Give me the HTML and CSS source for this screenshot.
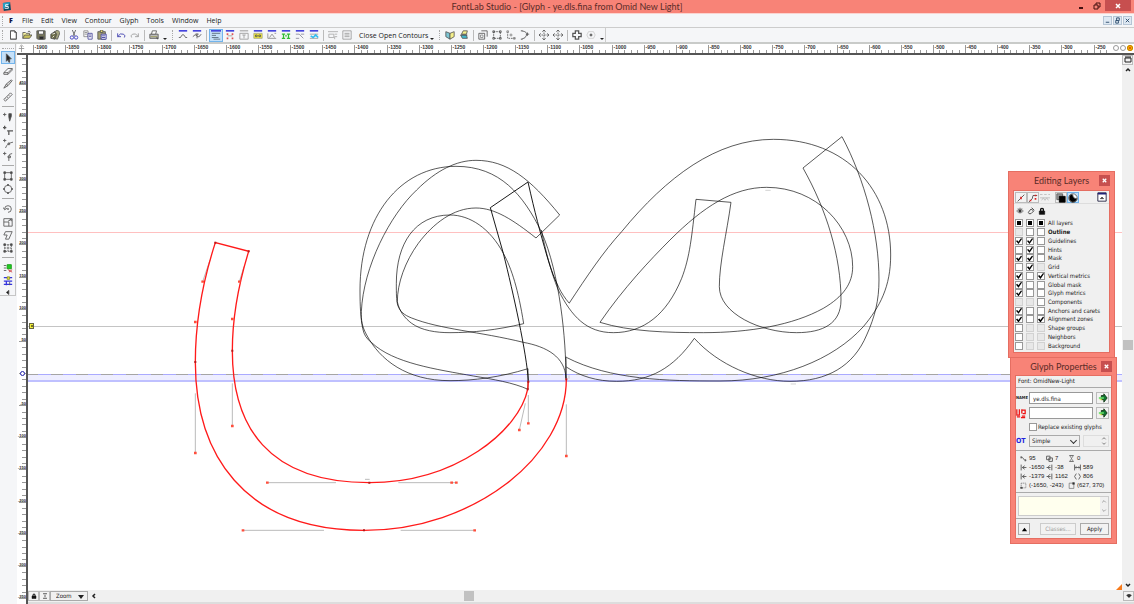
FILE: index.html
```html
<!DOCTYPE html>
<html lang="en">
<head>
<meta charset="utf-8">
<title>FontLab Studio - [Glyph - ye.dls.fina from Omid New Light]</title>
<link rel="stylesheet" href="styles.css">
</head>
<body>
<svg class="defs" aria-hidden="true">
  <symbol id="new" viewBox="0 0 12 12"><path d="M3 1h5l2 2v8H3z" fill="#fff"/><path d="M8 1v2h2M3 1h5l2 2v8H3z"/></symbol>
  <symbol id="open" viewBox="0 0 12 12"><path d="M1 10V3h3l1 1h4v2" fill="#fbf7a0"/><path d="M1 10l2-4h9l-3 4z" fill="#c9c25a"/><path d="M7 2q2-2 3 1"/></symbol>
  <symbol id="save" viewBox="0 0 12 12"><path d="M1 1h10v10H2l-1-1z" fill="#77775a"/><path d="M3 1h6v4H3z" fill="#fff"/><path d="M4 8h5v3H4z" fill="#222"/></symbol>
  <symbol id="saveall" viewBox="0 0 12 12"><path d="M4 3l5-3 3 3-3 8-5-1z" fill="#a5a580"/><path d="M1 5l5-3 2 3-2 6-5-1z" fill="#6b6b48"/><path d="M3 5l3-1M3 9l2-2" stroke="#fff"/></symbol>
  <symbol id="cut" viewBox="0 0 12 12"><path d="M4 0l3 7M8 0L5 7"/><circle cx="3.500" cy="9" r="2" stroke="#33b"/><circle cx="8.500" cy="9" r="2" stroke="#33b"/></symbol>
  <symbol id="copy" viewBox="0 0 12 12"><path d="M1 1h5v7H1zM2 3h3M2 5h3" stroke="#888"/><path d="M6 4h5v7H6z" fill="#fff" stroke="#449"/><path d="M7 6h3M7 8h3" stroke="#449"/></symbol>
  <symbol id="paste" viewBox="0 0 12 12"><path d="M1 2h9v9H1z" fill="#a39f70"/><path d="M4 0h3v3H4z" fill="#eee070"/><path d="M5 5h6v6H5z" fill="#fff" stroke="#339"/><path d="M6 7h4M6 9h4" stroke="#339"/></symbol>
  <symbol id="undo" viewBox="0 0 12 12"><path d="M2 4v4h4M2 8q3-5 7-3q3 2 1 4" stroke="#33a"/></symbol>
  <symbol id="redo" viewBox="0 0 12 12"><path d="M10 4v4H6M10 8Q7 3 3 5q-3 2-1 4" stroke="#999"/></symbol>
  <symbol id="print" viewBox="0 0 12 12"><path d="M1 5h10v5H1z" fill="#bbb"/><path d="M4 1h5l-1 4H3z" fill="#fff"/><path d="M2 8h8" stroke="#995"/><path d="M9 9l2 2" stroke-width="1.500"/></symbol>
  <symbol id="p1" viewBox="0 0 12 12"><path d="M1 1h10" class="blue"/><path d="M3 9q3-7 6 0M1 9h2M9 9h2"/></symbol>
  <symbol id="p2" viewBox="0 0 12 12"><path d="M1 1h10" class="blue"/><path d="M1 8q3-4 5-1t5-2M6 4v6M4 5h4"/></symbol>
  <symbol id="p3" viewBox="0 0 12 12"><path d="M0 1h12" class="blue"/><path d="M1 4h10M1 6.500h5M1 9h8M3 11h8" stroke="#567"/></symbol>
  <symbol id="p4" viewBox="0 0 12 12"><path d="M1 1h10" class="blue"/><path d="M2 5h2M8 5h2M2 10h2M8 10h2" stroke="#d55" stroke-width="2"/><path d="M3 7h6" stroke="#999"/></symbol>
  <symbol id="p5" viewBox="0 0 12 12"><path d="M1 1h10" stroke="#888"/><path d="M1 4h10v7H1zM4 6h4M6 6v4" stroke="#999"/></symbol>
  <symbol id="p6" viewBox="0 0 12 12"><path d="M1 1h10" class="blue"/><path d="M1 4h10v6H1z" fill="#f2e83a" stroke="#aa8"/><path d="M3 6h2v2H3zM7 6h2v2H7z"/></symbol>
  <symbol id="p7" viewBox="0 0 12 12"><path d="M1 1h10" class="blue"/><path d="M1 4v6h10M3 9l3-4 3 4M9 4h2" stroke="#888"/></symbol>
  <symbol id="p8" viewBox="0 0 12 12"><path d="M1 1h10" class="blue"/><path d="M1 5h4M1 10h4M7 5h4M7 10h4M3 5v5M9 5v5M5 7h2" stroke="#3b3" stroke-width="1.500"/></symbol>
  <symbol id="p9" viewBox="0 0 12 12"><path d="M1 1h10" class="blue"/><path d="M1 5h4l5 5M7 5h4M1 10h4" stroke="#889"/></symbol>
  <symbol id="p10" viewBox="0 0 12 12"><path d="M1 1h10" class="blue"/><path d="M1 5h10M1 10h10" stroke="#999"/><path d="M2 7l3 2 3-3 3 3" stroke="#3be" stroke-width="2"/></symbol>
  <symbol id="q1" viewBox="0 0 12 12"><path d="M0 2h12M1 5h6v4H1zM8 5h3M8 8h3M8 8v3" stroke="#aaa"/></symbol>
  <symbol id="q2" viewBox="0 0 12 12"><path d="M1 1h10v10H1zM3 4h6M3 6h6M3 8h6" stroke="#999"/></symbol>
  <symbol id="r1" viewBox="0 0 12 12"><path d="M1 2l5 2v7L1 8z" fill="#7cc6d4"/><path d="M11 2L6 4v7l5-3z" fill="#f5f08a"/></symbol>
  <symbol id="r2" viewBox="0 0 12 12"><path d="M3 5l2-4h5L9 5z" fill="#f5f08a"/><path d="M2 6h7l1 4H4z" fill="#41b7cc"/><path d="M2 6h8"/></symbol>
  <symbol id="s1" viewBox="0 0 12 12"><path d="M1 4h7v7H1zM4 1h7v7" /><path d="M3 6h3v3H3z" stroke="#888"/></symbol>
  <symbol id="s2" viewBox="0 0 12 12"><path d="M2 2h8v8H2z" stroke-dasharray="2 1"/><path d="M1 1h2v2H1zM9 1h2v2H9zM1 9h2v2H1zM9 9h2v2H9z"/></symbol>
  <symbol id="s3" viewBox="0 0 12 12"><path d="M2 2v8h9" stroke-dasharray="2 1"/><path d="M1 1h2v2H1zM5 5h2v2H5zM9 9h2v2H9z" stroke="#888"/></symbol>
  <symbol id="s4" viewBox="0 0 12 12"><path d="M2 1q7 1 6 5T2 11"/><path d="M1 1h2M7 5h4M9 3v4M1 11h2" /></symbol>
  <symbol id="t1" viewBox="0 0 12 12"><path d="M6 0v12M0 6h12" stroke-dasharray="2 1"/><path d="M4 2l2-2 2 2M4 10l2 2 2-2M2 4L0 6l2 2M10 4l2 2-2 2"/></symbol>
  <symbol id="u1" viewBox="0 0 12 12"><path d="M4 1h4v3h3v4H8v3H4V8H1V4h3z" stroke-width="1.500"/></symbol>
  <symbol id="u2" viewBox="0 0 12 12"><path d="M5 5h2v2H5z" fill="#777"/><path d="M3 2h6l2 4-2 4H3L1 6z" stroke="#ccc"/></symbol>

  <symbol id="arrow" viewBox="0 0 12 12"><path d="M4 1v9l2-2 1 3h1L8 7h2z" fill="#222"/></symbol>
  <symbol id="eraser" viewBox="0 0 12 12"><path d="M1 8l5-5h5v2L6 10H1zM1 8h5l5-5M6 8v2"/></symbol>
  <symbol id="knife" viewBox="0 0 12 12"><path d="M1 11l3-5 6-5 1 1-5 6zM4 6l2 2" fill="#ddd"/></symbol>
  <symbol id="measure" viewBox="0 0 12 12"><path d="M1 9l8-8 2 2-8 8zM3 8l1 1M5 6l1 1M7 4l1 1"/></symbol>
  <symbol id="pen" viewBox="0 0 12 12"><path d="M0 3h4M2 1v4M7 2h3v3L8 11 7 6z" fill="#444"/></symbol>
  <symbol id="corner" viewBox="0 0 12 12"><path d="M0 3h4M2 1v4M5 7h7M7 7v5" stroke-width="1.500"/></symbol>
  <symbol id="curve" viewBox="0 0 12 12"><path d="M0 3h4M2 1v4M3 12q2-6 9-7M6 6h2v2H6z"/></symbol>
  <symbol id="tangent" viewBox="0 0 12 12"><path d="M0 3h4M2 1v4M7 12V7q0-4 4-4M6 6h3v2H6z"/></symbol>
  <symbol id="rect" viewBox="0 0 12 12"><path d="M2 2h8v8H2z"/><path d="M1 1h2v2H1zM9 1h2v2H9zM1 9h2v2H1zM9 9h2v2H9z" fill="#444"/></symbol>
  <symbol id="oval" viewBox="0 0 12 12"><circle cx="6" cy="6" r="4.500"/><path d="M5 1h2M5 11h2M1 5v2M11 5v2" stroke-width="2"/></symbol>
  <symbol id="rotate" viewBox="0 0 12 12"><path d="M2 6a4 4 0 1 1 4 4M0 4l2 3 3-2M6 5v2M5 6h2"/></symbol>
  <symbol id="scale" viewBox="0 0 12 12"><path d="M1 2h10v9H1zM1 6h6v5M6 5l4-2M8 3h2v2"/></symbol>
  <symbol id="slant" viewBox="0 0 12 12"><path d="M3 2h8L7 11H3L5 6H1z"/></symbol>
  <symbol id="free" viewBox="0 0 12 12"><path d="M2 2h8v8H2zM6 2v8M2 6h8" stroke-dasharray="2 1"/><path d="M1 1h2v2H1zM9 1h2v2H9zM1 9h2v2H1zM9 9h2v2H9z" fill="#444"/></symbol>
  <symbol id="vg1" viewBox="0 0 12 12"><path d="M1 3h3M1 6h3M1 9h3"/><path d="M5 2h5v5H5z" fill="#2c2" stroke="#191"/><path d="M6 8l5 3M11 8l-4 3" stroke="#c33"/></symbol>
  <symbol id="vg2" viewBox="0 0 12 12"><path d="M1 2h10M1 6h10M1 10h10M4 6v5" stroke="#33d" stroke-width="1.500"/><path d="M5 1h3v3H5z" fill="#ee2" stroke="#883"/><path d="M8 7v4"/></symbol>
  <symbol id="left" viewBox="0 0 12 12"><path d="M7 4v5L4 6.500z" fill="#111"/></symbol>

  <symbol id="go" viewBox="0 0 12 12"><path d="M4 3h3V1l4 5-4 5V8H4z" fill="#173" stroke="#131"/><path d="M1 6h6" stroke="#6d6" stroke-width="2"/><path d="M2 8h3" stroke="#de3"/></symbol>
  <symbol id="node1" viewBox="0 0 12 12"><path d="M2 10l8-8" stroke="#444"/><path d="M5 6h2" stroke="#d22" stroke-width="3"/></symbol>
  <symbol id="node2" viewBox="0 0 12 12"><path d="M1 11l4-4 1-4h5" stroke="#444"/><path d="M2 9h2M8 3h2M8 7h2" stroke="#d22" stroke-width="2"/></symbol>
  <symbol id="node3" viewBox="0 0 12 12"><path d="M0 3h3M5 3h3M10 3h2M0 7h12M2 10l2-3 2 3 2-3 2 3" stroke="#bbb"/></symbol>
  <symbol id="stack" viewBox="0 0 12 12"><path d="M1 1h7v7H1z" fill="#999"/><path d="M4 4h7v7H4z" fill="#000" stroke="#000"/></symbol>
  <symbol id="yin" viewBox="0 0 12 12"><circle cx="6" cy="6" r="5" fill="#fff"/><path d="M2 3q4-3 4 1q1 3 5 3q-2 5-6 4Q0 9 2 3z" fill="#000"/></symbol>
  <symbol id="win" viewBox="0 0 12 12"><path d="M1 1h10v10H1z" fill="#fff" stroke="#113"/><path d="M1 2h10" stroke="#227" stroke-width="2"/><path d="M4 8l2-2 2 2z" fill="#111"/></symbol>
  <symbol id="eye" viewBox="0 0 12 12"><path d="M1 6q5-6 10 0q-5 6-10 0z"/><circle cx="6" cy="6" r="2" fill="#222"/><path d="M3 2l1 2M6 1v2M9 2L8 4"/></symbol>
  <symbol id="edit" viewBox="0 0 12 12"><path d="M2 8l4-5 4 3-4 4H3zM7 1l4 4" stroke-width="1.500"/></symbol>
  <symbol id="lock" viewBox="0 0 12 12"><path d="M2 6h8v5H2z" fill="#111" stroke="#111"/><path d="M4 6V3q2-2 4 0v3" stroke="#111" stroke-width="2"/></symbol>
  <symbol id="m1" viewBox="0 0 12 12"><path d="M1 4h3l4 5h3M2 2v4M9 7v4" stroke-width="1.500"/></symbol>
  <symbol id="m2" viewBox="0 0 12 12"><path d="M1 2h6v6H1zM5 5h6v6H5z" stroke-width="1.500"/></symbol>
  <symbol id="m3" viewBox="0 0 12 12"><path d="M3 1h6L6 6l3 5H3l3-5zM2 1h8M2 11h8"/></symbol>
  <symbol id="m4" viewBox="0 0 12 12"><path d="M2 1v10M11 6H4M8 3L4 6l4 3" stroke-width="1.500"/></symbol>
  <symbol id="m5" viewBox="0 0 12 12"><path d="M10 1v10M1 6h7M7 2L3 6l4 4" stroke-width="1.500"/></symbol>
  <symbol id="m6" viewBox="0 0 12 12"><path d="M1 1v10M11 1v10M2 6h8M4 4L2 6l2 2M8 4l2 2-2 2" stroke-width="1.500"/></symbol>
  <symbol id="m9" viewBox="0 0 12 12"><path d="M4 1L1 6l3 5M8 1l3 5-3 5" stroke-width="1.500"/></symbol>
  <symbol id="m7" viewBox="0 0 12 12"><path d="M2 2h8v8H2z" stroke-dasharray="2 1"/><path d="M1 9h3v2H1z" fill="#222"/></symbol>
  <symbol id="m8" viewBox="0 0 12 12"><path d="M2 2h8v9H2z"/><path d="M8 1h3v3H8z" fill="#222"/></symbol>
</svg>

<header class="titlebar">
  <svg class="logo" viewBox="0 0 10 10"><path d="M1 1l8-1 1 9-8 1z" fill="#0d4d66"/><path d="M1 1l8-1-1 3-7 5z" fill="#2b9dc0"/><path d="M7 3H4v2h3v2H3" fill="none" stroke="#fff"/></svg>
  <h1>FontLab Studio - [Glyph - ye.dls.fina from Omid New Light]</h1>
  <div class="winctl">
    <button aria-label="Minimize"><svg viewBox="0 0 8 8"><path d="M2 6h4" stroke="#411" stroke-width="2"/></svg></button>
    <button aria-label="Restore"><svg viewBox="0 0 8 8"><path d="M1 3h4v4H1zM3 3V1h4v4H5" fill="none" stroke="#411"/></svg></button>
    <button class="close" aria-label="Close"><svg viewBox="0 0 8 8"><path d="M2 2l4 4M6 2L2 6" stroke="#fff" stroke-width="1.500"/></svg></button>
  </div>
</header>

<nav class="menubar">
  <i class="grip"></i>
  <b class="f">F</b>
  <button>File</button><button>Edit</button><button>View</button><button>Contour</button><button>Glyph</button><button>Tools</button><button>Window</button><button>Help</button>
  <div class="mdi">
    <button aria-label="Minimize document"><svg viewBox="0 0 8 8"><path d="M2 6h4" stroke="#246"/></svg></button>
    <button aria-label="Restore document"><svg viewBox="0 0 8 8"><path d="M2 4h3v3H2zM3 4V1h3v3H5" fill="none" stroke="#246"/></svg></button>
    <button aria-label="Close document"><svg viewBox="0 0 8 8"><path d="M2 2l4 4M6 2L2 6" stroke="#246"/></svg></button>
  </div>
</nav>

<div class="toolbar" id="toolbar"></div>

<main class="work">
  <aside class="dock"><div class="tools" id="tools"></div></aside>
  <div class="hruler">
    <svg class="cross" viewBox="0 0 10 10"><path d="M5 2v7M2 5h6M3 3l2-2 2 2" fill="none" stroke="#999"/></svg>
    <svg class="scale" id="hscale"></svg>
    <div class="dots"><i></i><i></i><i class="hot"></i></div>
  </div>
  <svg class="vruler" id="vscale"></svg>
  <section class="canvas">
    <svg class="drawing">
      <rect class="zone" x="0" y="320" width="100%" height="5"/>
      <rect class="zoneline" x="0" y="325" width="100%" height="2"/>
      <path class="meanline" d="M0 177.500H4000"/>
      <path class="xline" d="M0 271.500H4000"/>
      <path class="baseline" d="M0 319.500H4000"/>
      <path class="basedash" d="M10 319.500H4000"/>
      <g transform="translate(-28 -55)">
        <rect x="29.500" y="323.500" width="4" height="5" fill="#f4f03c" stroke="#664"/><path d="M31 326h2" stroke="#000"/>
        <g class="ink" transform="translate(340 140) scale(.33333)">
          <path d="M678 715C678 600 660 400 604 275C550 165 480 79 348 79C180 79 60 230 60 450C60 500 62 535 68 565C72 585 80 597 95 608C160 670 290 688 400 708C460 718 520 728 564 748V686C480 712 400 722 330 722C200 722 120 660 80 585C66 560 63 540 64 515C70 380 150 225 230 150C290 90 350 61 408 61C500 61 570 115 659 225L588 294C520 240 465 204 408 204C340 204 280 250 235 310C195 365 172 430 172 485C178 515 195 535 215 550C245 572 290 578 330 578C400 578 470 570 551 551C535 450 515 385 490 340C450 265 390 225 330 225C225 225 169 310 169 430C169 460 169 480 173 495C180 515 192 525 215 534C300 568 420 575 550 607C620 620 675 650 678 715"/>
          <path d="M604 270C620 350 640 415 655 450"/>
          <path class="heavy" d="M565 722C560 640 520 460 490 340L451 203L564 126C585 220 600 275 620 345C635 395 645 420 655 440"/>
          <path d="M655 440C665 460 675 475 688 490M678 650V718"/>
        </g>
        <g class="ink" transform="translate(560 120) scale(.33333)">
          <path d="M28 549C80 470 130 395 185 335C320 170 470 58 640 58C860 58 992 210 992 405C992 500 960 560 910 620C820 720 660 783 480 783C320 783 150 780 19 712"/>
          <path d="M19 741C60 768 110 784 170 784C270 784 340 745 403 655C475 735 590 784 690 784C800 784 880 740 920 645C945 590 957 540 957 480C957 340 915 180 846 50L729 144C800 270 843 410 843 540C843 610 790 638 710 638C600 638 478 580 478 500C478 430 500 340 513 247L408 238C395 350 390 410 365 475C320 585 250 638 160 638C80 638 35 590 -5 510"/>
          <path d="M120 607C190 505 270 420 330 360C430 260 520 202 620 202C770 202 878 320 878 440C878 490 850 530 790 565C700 615 570 638 430 638C320 638 210 635 120 607"/>
          <path class="tick" d="M616 211h16M692 792h16M27 766v10"/>
        </g>
        <g transform="translate(180 230) scale(.33333)">
          <path class="lever" d="M46 490V669M157 460V588M262 758H468M655 758H829M189 901H432M662 901H884M1159 523V678M1045 495V580M1036 520L1018 600M68 155L90 90M178 155L192 110M555 748h14"/>
          <path class="red" d="M1045 455L1043 478C1018 600 829 758 568 758C262 758 157 588 157 362C157 267 178 155 206 64L106 38C68 155 46 276 46 396C46 669 189 901 552 901C884 901 1159 678 1159 448"/>
          <path class="pts" d="M42 669h8M153 588h8M258 758h8M811 758h8M825 758h8M185 901h8M880 901h8M1155 678h8M1041 580h8M1014 600h8M64 155h8M174 155h8M42 276h8M153 267h8"/>
          <path class="nodes" d="M103 38h6M203 64h6M43 396h6M154 362h6M565 758h6M549 901h6M1040 478h6M1042 455h6M1156 448h6"/>
        </g>
      </g>
    </svg>
    <i class="corner"></i>
  </section>
  <div class="vscroll">
    <button class="box" aria-label="Maximize view"><svg viewBox="0 0 8 8"><path d="M1 2h6v4H1zM1 1h6" fill="none" stroke="#222"/></svg></button>
    <button aria-label="Scroll up"><svg viewBox="0 0 8 8"><path d="M2 5l2-2 2 2" fill="none" stroke="#222" stroke-width="1.500"/></svg></button>
    <div class="track"><i class="thumb"></i></div>
    <button aria-label="Scroll down"><svg viewBox="0 0 8 8"><path d="M2 3l2 2 2-2" fill="none" stroke="#222" stroke-width="1.500"/></svg></button>
  </div>
  <footer class="hscroll">
    <button class="box" aria-label="Lock"><svg class="ic"><use href="#lock"/></svg></button>
    <button class="box" aria-label="Info"><svg class="ic"><use href="#m3"/></svg></button>
    <div class="pick zoom"><select aria-label="Zoom"><option>Zoom</option></select></div>
    <button aria-label="Scroll left"><svg viewBox="0 0 8 8"><path d="M5 2L3 4l2 2" fill="none" stroke="#222" stroke-width="1.500"/></svg></button>
    <div class="track"><i class="thumb"></i></div>
    <button class="box" aria-label="Options"><svg viewBox="0 0 8 8"><path d="M2 2h4M1 3h6L4 6z" fill="#222" stroke="#222"/></svg></button>
  </footer>
</main>

<section class="panel layers">
  <h2>Editing Layers</h2><button class="x" aria-label="Close layers"><svg viewBox="0 0 8 8"><path d="M2 2l4 4M6 2L2 6" stroke="#fff" stroke-width="1.500"/></svg></button>
  <div class="body">
    <div class="modes">
      <button class="box" aria-label="Nodes"><svg class="ic"><use href="#node1"/></svg></button>
      <button class="box" aria-label="Control vectors"><svg class="ic"><use href="#node2"/></svg></button>
      <button aria-label="Coordinates"><svg class="ic"><use href="#node3"/></svg></button>
      <button class="box push" aria-label="Fill outline"><svg class="ic"><use href="#stack"/></svg></button>
      <button class="box on" aria-label="Contrast"><svg class="ic"><use href="#yin"/></svg></button>
      <button class="box end" aria-label="Panel options"><svg class="ic"><use href="#win"/></svg></button>
    </div>
    <div class="heads"><svg class="ic"><use href="#eye"/></svg><svg class="ic"><use href="#edit"/></svg><svg class="ic"><use href="#lock"/></svg></div>
    <div class="rows" id="rows"></div>
  </div>
</section>

<section class="panel props">
  <h2>Glyph Properties</h2><button class="x" aria-label="Close properties"><svg viewBox="0 0 8 8"><path d="M2 2l4 4M6 2L2 6" stroke="#fff" stroke-width="1.500"/></svg></button>
  <div class="body">
    <div class="font">Font: OmidNew-Light</div>
    <div class="form">
      <label class="tag" for="gname">NAME</label><input class="field" id="gname" value="ye.dls.fina"><button class="box" aria-label="Apply name"><svg class="ic"><use href="#go"/></svg></button>
      <label class="tag uni" for="guni" title="Unicode"><svg viewBox="0 0 12 12"><path d="M1 1v7h3V1M7 1v5M7 2h4v4H8M1 10h4M7 9h4M6 11h5" fill="none" stroke="#e11" stroke-width="1.500"/></svg></label><input class="field" id="guni"><button class="box" aria-label="Apply code"><svg class="ic"><use href="#go"/></svg></button>
      <label class="replace"><input type="checkbox">Replace existing glyphs</label>
      <label class="tag ot" for="gtype">OT</label>
      <div class="typerow"><div class="pick chev"><select id="gtype"><option>Simple</option></select></div>
      <div class="spin"><svg viewBox="0 0 8 12"><path d="M2 4l2-2 2 2M2 8l2 2 2-2" fill="none" stroke="#666"/></svg></div></div>
    </div>
    <div class="stats">
      <div class="three"><svg class="ic"><use href="#m1"/></svg><span>95</span><svg class="ic"><use href="#m2"/></svg><span>7</span><svg class="ic"><use href="#m3"/></svg><span>0</span></div>
      <div><svg class="ic"><use href="#m4"/></svg><span>-1650</span><svg class="ic"><use href="#m5"/></svg><span>-38</span><svg class="ic"><use href="#m6"/></svg><span>589</span></div>
      <div><svg class="ic"><use href="#m4"/></svg><span>-1379</span><svg class="ic"><use href="#m5"/></svg><span>1162</span><svg class="ic"><use href="#m9"/></svg><span>806</span></div>
      <div class="wide"><svg class="ic"><use href="#m7"/></svg><span>(-1650, -243)</span><svg class="ic"><use href="#m8"/></svg><span>(627, 370)</span></div>
    </div>
    <div class="note"><textarea aria-label="Note"></textarea><svg viewBox="0 0 8 20"><path d="M2 6l2-2 2 2M2 14l2 2 2-2" fill="none" stroke="#999"/></svg></div>
    <div class="actions"><button class="box up" aria-label="Collapse"><svg viewBox="0 0 8 8"><path d="M1 6l3-4 3 4z" fill="#000"/></svg></button><button class="push classes" disabled>Classes...</button><button class="push">Apply</button></div>
  </div>
</section>
<script src="app.js"></script>
</body>
</html>
```

FILE: styles.css
```css
* { box-sizing: border-box; }
html, body { height: 100%; }
body {
  margin: 0; display: flex; flex-direction: column; overflow: hidden; position: relative;
  font: 7px/9px "Open Sans", "Noto Sans", sans-serif; color: #1a1a1a; background: #f5f6f8;
}
button, input, select, textarea { font: inherit; color: inherit; margin: 0; padding: 0; border: 0; background: none; border-radius: 0; }
h1, h2 { margin: 0; font-weight: 400; }
svg { display: block; }
.defs { position: absolute; width: 0; height: 0; }
symbol { fill: none; stroke: #555; }
symbol .blue { stroke: #44d; stroke-width: 2; }
.ic { width: 10px; height: 10px; fill: none; stroke: #555; }

.titlebar { flex: none; height: 14px; display: grid; grid-template-columns: 61px 1fr 61px; background: #f88377; border-bottom: 1px solid #fbd3cf; }
.logo { width: 9px; height: 9px; margin: 2px; }
.titlebar h1 { text-align: center; font: 9px/13px Lato, "Open Sans", sans-serif; color: #5a2b27; }
.winctl { display: flex; height: 11px; }
.winctl button { width: 16px; display: grid; place-items: center; }
.winctl svg { width: 8px; height: 8px; }
.winctl .close { width: 26px; background: #c74f4f; }

.menubar { flex: none; height: 14px; display: flex; align-items: center; border-bottom: 1px solid #ccc; }
.menubar > button { margin-right: 8px; }
.menubar .f { width: 15px; color: #114; font-size: 7px; font-weight: 800; padding-left: 3px; }
.menubar .f + button { margin-left: 1px; }
.grip { width: 2px; height: 10px; margin: 0 2px; border-left: 1px dotted #aaa; }
.mdi { margin-left: auto; display: flex; gap: 1px; padding-right: 2px; }
.mdi button { width: 9px; height: 9px; background: #dfe9f3; border: 1px solid #b5c5d5; }
.mdi svg { width: 7px; height: 7px; }

.toolbar { flex: none; height: 16px; display: flex; align-items: center; border-bottom: 2px solid #c9cbc9; }
.tb { width: 14px; height: 13px; display: grid; place-items: center; flex: none; }
.tb.on { background: #c5e0f8; border: 1px solid #72b4ec; }
.sep { width: 1px; height: 11px; margin: 0 2px; background: #bbb; }
.caret { width: 7px; height: 10px; display: grid; place-items: end center; }
.caret::after { content: ""; border: 2px solid transparent; border-top-color: #222; border-bottom: 0; }
.textbtn { padding: 0 0 0 5px; }
.toolbar .grip { margin: 0 2px 0 4px; }
.toolbar .grip:first-child { margin-left: 2px; }
.toolbar .end { width: 1px; height: 14px; background: #ccc; }

.work { flex: 1; min-height: 0; display: grid; grid-template: 11px 1fr 14px / 17px 11px 1fr 12px; background: #fff; }
.dock { grid-row: 1 / 4; background: #f5f6f8; }
.tools { width: 16px; padding: 7px 1px 0; display: flex; flex-direction: column; align-items: center; border: solid #c5c5c5; border-width: 0 1px 1px 0; }
.tools::before { content: ""; width: 12px; border-top: 1px dotted #aaa; margin: -3px 0 2px; }
.tools hr { width: 12px; height: 1px; margin: 3px 0; border: 0; background: #aaa; }
.tools .small { height: 8px; }
.hruler { grid-column: 2 / 5; display: flex; border-bottom: 2px solid #555; }
.cross { width: 9px; height: 9px; flex: none; }
.hruler .scale { flex: 1; min-width: 0; height: 9px; }
.dots { display: flex; gap: 1px; padding: 1px 1px 0 0; }
.dots i { width: 6px; height: 6px; border: 1px solid #999; border-radius: 50%; }
.dots .hot { background: #d40; border: 2px solid #fb0; outline: 1px solid #b70; outline-offset: -1px; }
.vruler { grid-row: 2 / 4; width: 11px; height: 100%; border-right: 2px solid #555; }
.scale text { font: bold 5px "Liberation Sans", sans-serif; fill: #333; }
.vruler text { font: bold 4px "Liberation Sans", sans-serif; fill: #222; }
.scale path, .vruler path { stroke: #999; }
.canvas { position: relative; overflow: hidden; }
.drawing { width: 100%; height: 100%; }
.zone { fill: #eeeeff; } .zoneline { fill: #bfc0ff; }
.meanline { stroke: #ffc0c0; } .xline { stroke: #c4c4c4; } .baseline { stroke: #a5a5a5; }
.basedash { stroke: #aaf; stroke-dasharray: 13 12; }
.ink path { fill: none; stroke: #000; stroke-opacity: .65; stroke-width: 3; }
.ink .heavy { stroke-width: 3; stroke-opacity: .9; }
.ink .tick { stroke: #bbb; }
.lever { fill: none; stroke: #bbb; stroke-width: 3; }
.red { fill: none; stroke: #ff1a1a; stroke-width: 4; }
.pts { stroke: #ff4e3c; stroke-width: 7; } .nodes { stroke: #b81818; stroke-width: 6; }
.corner { position: absolute; right: 0; bottom: 0; width: 6px; height: 6px; background: #f77b1c; clip-path: polygon(100% 0, 100% 100%, 0 100%); }
.vscroll { display: flex; flex-direction: column; background: #f0f0f0; }
.vscroll button, .hscroll > button { width: 11px; height: 10px; display: grid; place-items: center; flex: none; }
.vscroll svg, .hscroll svg { width: 8px; height: 8px; }
.box { background: #f2f2f2; border: 1px solid #bbb; display: grid; place-items: center; }
.track { flex: 1; display: flex; }
.thumb { background: #c1c1c1; width: 10px; height: 10px; }
.vscroll .track { flex-direction: column; padding-left: 1px; }
.vscroll .track::before { content: ""; flex: 53 0 0; }
.vscroll .track::after { content: ""; flex: 46 0 0; }
.hscroll { grid-column: 3 / 5; background: #f0f0f0; display: flex; align-items: center; border-bottom: 2px solid #ddd; }
.hscroll .box svg { width: 6px; height: 6px; }
.hscroll .track::before { content: ""; flex: 36 0 0; }
.hscroll .track::after { content: ""; flex: 64 0 0; }
.pick { position: relative; }
.pick select { appearance: none; width: 100%; height: 100%; padding-left: 2px; border: 1px solid #aaa; background: #f0f0f0; }
.pick::after { content: ""; position: absolute; right: 4px; top: 4px; border: 3px solid transparent; border-top: 4px solid #222; border-bottom: 0; }
.zoom { width: 38px; height: 10px; font: 6px/8px "DejaVu Sans Condensed", "DejaVu Sans", sans-serif; }
.zoom select { padding-left: 5px; }
.chev::after { border: solid #333; border-width: 0 1px 1px 0; width: 4px; height: 4px; transform: rotate(45deg); top: 3px; }

.panel { position: absolute; width: 107px; padding: 0 4px 4px; background: #f88377; border: 1px solid #e56e62; font: 6px/8px "DejaVu Sans Condensed", "DejaVu Sans", sans-serif; }
.panel h2 { font: 9px/18px Lato, "Open Sans", sans-serif; color: #5a2b27; text-align: center; }
.panel .x { position: absolute; right: 4px; top: 3px; width: 11px; height: 11px; background: #c74f4f; display: grid; place-items: center; }
.panel .x svg { width: 7px; height: 7px; }
.panel .body { background: #f0f0f0; border: 1px solid #e56e62; }
.layers { right: 19px; top: 171px; height: 187px; display: flex; flex-direction: column; }
.layers .body { flex: 1; display: flex; flex-direction: column; }
.modes { display: flex; align-items: center; padding: 1px; height: 13px; border-bottom: 1px solid #ddd; }
.modes button { width: 12px; height: 11px; display: grid; place-items: center; }
.modes .push { margin-left: 4px; }
.modes .on { background: #c5e0f8; border-color: #72b4ec; }
.modes .end { margin-left: auto; border: 0; }
.heads { display: flex; gap: 3px; padding: 3px 2px 2px; }
.heads svg { width: 8px; height: 8px; }
.rows { flex: 1; display: grid; grid-template-rows: 11px; grid-auto-rows: 1fr; padding: 0 1px 2px; }
.row { display: flex; align-items: center; gap: 3px; min-height: 0; }
.row.strong { font-weight: 700; }
input[type="checkbox"] { appearance: none; width: 8px; height: 8px; background: #fff; border: 1px solid #999; display: grid; place-items: center; flex: none; }
input[type="checkbox"]:checked::before { content: ""; width: 6px; height: 6px; background: #000; clip-path: polygon(0 50%, 20% 35%, 40% 60%, 85% 0, 100% 15%, 42% 100%); }
input[type="checkbox"].mixed::before { content: ""; width: 4px; height: 4px; background: #000; }
input[type="checkbox"]:disabled { background: #e8e8e8; border-color: #d2d2d2; }

.props { right: 17px; top: 357px; }
.props h2 { line-height: 17px; }
.props .font { height: 12px; padding: 1px 2px; border-bottom: 1px solid #aaa; }
.form { display: grid; grid-template-columns: 10px 1fr 13px; gap: 3px; padding: 4px 2px 3px 0; align-items: center; border-bottom: 1px solid #aaa; }
.form .field { width: 100%; height: 12px; padding: 0 3px; background: #fff; border: 1px solid #999; }
.form .box { height: 12px; }
.tag { font-size: 4px; font-weight: 700; }
.tag svg { width: 10px; height: 11px; }
.tag.ot { font-size: 7px; color: #22d; }
.replace { grid-column: 2 / 4; display: flex; align-items: center; gap: 1px; padding: 1px 0; white-space: nowrap; }
.typerow { grid-column: 2 / 4; display: flex; justify-content: space-between; }
.chev { width: 51px; height: 12px; }
.spin { width: 26px; height: 12px; border: 1px solid #ddd; display: flex; justify-content: flex-end; }
.spin svg { width: 8px; height: 10px; }
.stats { padding: 3px 4px 2px; border-bottom: 1px solid #aaa; font: 6px/9px "Liberation Sans", sans-serif; }
.stats > div { display: grid; grid-template-columns: 9px 17px 9px 19px 9px 18px; align-items: center; white-space: nowrap; }
.stats > .three { grid-template-columns: 9px 17px 9px 13px 9px 18px; }
.stats > .wide { grid-template-columns: 9px 39px 9px 30px; }
.stats .ic { width: 7px; height: 7px; }
.note { margin: 3px 2px 2px; display: flex; height: 20px; border: 1px solid #ccc; }
.note textarea { flex: 1; min-width: 0; resize: none; background: #ffffee; overflow: hidden; }
.note svg { width: 8px; height: 18px; }
.actions { display: flex; align-items: center; gap: 4px; padding: 4px 2px 3px; border-top: 1px solid #aaa; }
.actions button { height: 12px; border: 1px solid #aaa; }
.actions .up { width: 12px; }
.actions .up svg { width: 7px; height: 7px; }
.actions .push { width: 29px; background: #f2f2f2; }
.actions .classes { width: 36px; margin-left: auto; color: #999; border-color: #ccc; }
```

FILE: app.js
```js
const icon = id => `<svg class="ic"><use href="#${id}"/></svg>`;
const btn = (id, cls = '') => `<button class="tb ${cls}" aria-label="${id}">${icon(id)}</button>`;

// Command bar: "|" separator, ":" grip, "v" overflow caret, "=" text command
const bar = ': new open save saveall | cut copy paste | undo redo | print v : p1 p2 | p3 p4 p5 p6 p7 p8 p9 p10 | q1 q2 = v : r1 r2 | s1 s2 s3 s4 | t1 t1 | u1 u2 v .';
document.getElementById('toolbar').innerHTML = bar.split(' ').map(t => ({
  '|': '<i class="sep"></i>', ':': '<i class="grip"></i>', 'v': '<button class="caret" aria-label="More"></button>',
  '=': '<button class="textbtn">Close Open Contours</button>', '.': '<i class="end"></i>'
}[t] || btn(t, t === 'p3' ? 'on' : ''))).join('');

const tools = 'arrow eraser knife measure | pen corner curve tangent | rect oval | rotate scale slant free | vg1 vg2 left';
document.getElementById('tools').innerHTML = tools.split(' ').map(t =>
  t === '|' ? '<hr>' : btn(t, t === 'arrow' ? 'on' : t === 'left' ? 'small' : '')).join('');

// Rulers: one tick every 10 units, a label every 50
const STEP = 32.14;
const hs = document.getElementById('hscale'), vs = document.getElementById('vscale');
function rulers() {
  const w = hs.getBoundingClientRect().width, t = vs.getBoundingClientRect().height;
  let h = '', d = '';
  for (let i = 0; 7 + i * STEP / 5 < w; i++) {
    const x = Math.round(7 + i * STEP / 5) + .5;
    d += i % 5 ? `M${x} 6V9` : `M${x} 1V9`;
    if (i % 5 === 0 && x + 13 < w) h += `<text x="${x + 1}" y="5">${-1900 + i * 10}</text>`;
  }
  hs.innerHTML = `<path d="${d}"/>` + h;
  h = ''; d = '';
  for (let i = -49; 318 + i * STEP / 5 < t; i++) {
    const y = Math.round(318 + i * STEP / 5) + .5;
    d += i % 5 ? `M5 ${y}H9` : `M2 ${y}H9`;
    if (i % 5 === 0 && i) h += `<text x="9" y="${y - 1}" text-anchor="end">${-i * 10}</text>`;
  }
  vs.innerHTML = `<path d="${d}"/>` + h + '<circle cx="5.5" cy="318.5" r="2" fill="#fff" stroke="#22a"/>';
}
rulers();
addEventListener('resize', rulers);

// Layer flags: x checked, o clear, - unavailable, m mixed
const layers = [['All layers', 'mmm'], ['Outline', '-oo'], ['Guidelines', 'xxo'], ['Hints', 'oxo'], ['Mask', 'xxo'],
  ['Grid', 'ox-'], ['Vertical metrics', 'xox'], ['Global mask', 'xoo'], ['Glyph metrics', 'xoo'], ['Components', '--o'],
  ['Anchors and carets', 'xoo'], ['Alignment zones', 'xox'], ['Shape groups', 'o--'], ['Neighbors', 'o--'], ['Background', 'o--']];
const kinds = ['visible', 'editable', 'locked'];
document.getElementById('rows').innerHTML = layers.map(([name, flags]) =>
  `<div class="row${name === 'Outline' ? ' strong' : ''}">` + [...flags].map((f, k) =>
    `<input type="checkbox" aria-label="${name} ${kinds[k]}"${f === 'x' ? ' checked' : ''}${f === '-' ? ' disabled' : ''}${f === 'm' ? ' class="mixed"' : ''}>`).join('') +
  `<span>${name}</span></div>`).join('');
```
